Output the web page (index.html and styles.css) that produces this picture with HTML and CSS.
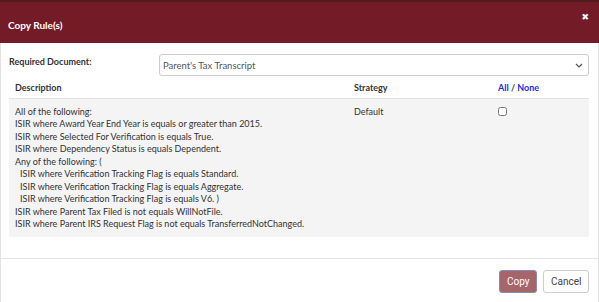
FILE: index.html
```html
<!DOCTYPE html>
<html lang="en">
<head>
    <meta charset="UTF-8">
    <title>Copy Rule(s)</title>
    <link rel="stylesheet" href="styles.css">
</head>
<body>
    <div class="modal">
        <div class="modal-header">
            <h4 class="modal-title">Copy Rule(s)</h4>
            <span class="close">&#x2716;</span>
        </div>
        <div class="modal-body">
            <div class="field">
                <label for="doc">Required Document:</label>
                <div class="select-wrap">
                    <select id="doc">
                        <option>Parent's Tax Transcript</option>
                    </select>
                    <svg class="chevron" width="8" height="5" viewBox="0 0 8 5"><path d="M1 1l3 3 3-3" fill="none" stroke="#555" stroke-width="1.2"/></svg>
                </div>
            </div>
            <table class="rules">
                <thead>
                    <tr>
                        <th class="col-desc">Description</th>
                        <th class="col-strategy">Strategy</th>
                        <th class="col-select"><a href="#">All</a> / <a href="#">None</a></th>
                    </tr>
                </thead>
                <tbody>
                    <tr>
                        <td class="col-desc">
                            <div>All of the following:</div>
                            <div>ISIR where Award Year End Year is equals or greater than 2015.</div>
                            <div>ISIR where Selected For Verification is equals True.</div>
                            <div>ISIR where Dependency Status is equals Dependent.</div>
                            <div>Any of the following: (</div>
                            <div class="indent">ISIR where Verification Tracking Flag is equals Standard.</div>
                            <div class="indent">ISIR where Verification Tracking Flag is equals Aggregate.</div>
                            <div class="indent">ISIR where Verification Tracking Flag is equals V6. )</div>
                            <div>ISIR where Parent Tax Filed is not equals WillNotFile.</div>
                            <div>ISIR where Parent IRS Request Flag is not equals TransferredNotChanged.</div>
                        </td>
                        <td class="col-strategy">Default</td>
                        <td class="col-select"><input type="checkbox"></td>
                    </tr>
                </tbody>
            </table>
        </div>
        <div class="modal-footer">
            <button class="btn btn-primary">Copy</button>
            <button class="btn btn-default">Cancel</button>
        </div>
    </div>
</body>
</html>
```

FILE: styles.css
```css
body {
    margin: 0;
    padding: 0;
    background-color: #fff;
    font-family: Lato, "Open Sans", sans-serif;
    font-size: 9px;
    color: #333;
}

.modal {
    width: 599px;
    height: 302px;
    box-sizing: border-box;
    border-left: 1px solid #e2e2e2;
    border-right: 1px solid #e2e2e2;
    display: flex;
    flex-direction: column;
}

.modal-header {
    height: 43px;
    box-sizing: border-box;
    background-color: #731b26;
    border-top: 2px solid #4e1d22;
    display: flex;
    align-items: center;
    justify-content: space-between;
    padding: 4px 10px 0 8px;
    margin: 0 -1px;
}

.modal-title {
    margin: 0;
    color: #fff;
    font-size: 10px;
    font-weight: bold;
}

.close {
    color: #fff;
    font-size: 9px;
    margin-top: -16px;
    font-family: "DejaVu Sans", sans-serif;
}

.modal-body {
    padding: 11px 9px 0 8px;
    height: 216px;
    box-sizing: border-box;
    border-bottom: 1px solid #e5e5e5;
}

.field {
    display: flex;
    align-items: center;
}

.field label {
    width: 150px;
    font-weight: bold;
    margin-top: -8px;
}

.select-wrap {
    flex: 1;
    position: relative;
}

.select-wrap select {
    display: block;
    width: 100%;
    height: 22px;
    appearance: none;
    border: 1px solid #ccc;
    border-radius: 3px;
    background-color: #fff;
    padding: 0 3px;
    font-family: Lato, sans-serif;
    font-size: 9.5px;
    color: #555;
}

.chevron {
    position: absolute;
    right: 6px;
    top: 9px;
}

.rules {
    width: 100%;
    border-collapse: collapse;
    margin-top: 1px;
}

.rules th {
    text-align: left;
    font-weight: bold;
    padding: 5px 6px 4px;
    border-bottom: 1px solid #e2e2e2;
    line-height: 12px;
}

.rules td {
    background-color: #f4f4f4;
    vertical-align: top;
    padding: 7px 6px 6px;
    line-height: 12.45px;
}

.rules .col-desc {
    width: 327px;
}

.rules .col-strategy {
    width: 132px;
}

.rules th a {
    color: #1f2fd6;
    text-decoration: none;
}

.rules td input {
    margin: 1px 0 0;
    width: 9px;
    height: 9px;
}

.indent {
    padding-left: 5px;
}

.modal-footer {
    display: flex;
    justify-content: flex-end;
    gap: 6px;
    padding: 11px 9px 0;
}

.btn {
    height: 23px;
    font-family: Roboto, sans-serif;
    font-size: 10px;
    border-radius: 3px;
    padding: 0 7px;
    cursor: pointer;
}

.btn-primary {
    background-color: #a5656b;
    color: #fff;
    border: 1px solid #7f8fb8;
    width: 38px;
}

.btn-default {
    background-color: #fff;
    color: #444;
    border: 1px solid #ccc;
    width: 46px;
}
```
